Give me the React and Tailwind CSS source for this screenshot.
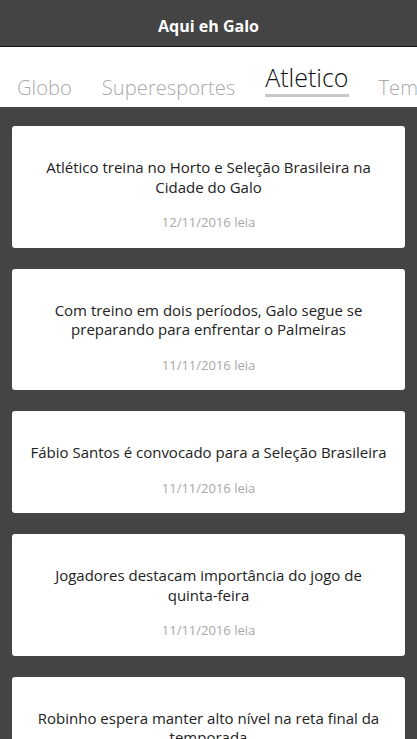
import React from "react";

const tabs = [
  { label: "Globo", active: false },
  { label: "Superesportes", active: false },
  { label: "Atletico", active: true },
  { label: "Tempo Real", active: false },
];

const news = [
  { title: "Atlético treina no Horto e Seleção Brasileira na Cidade do Galo", date: "12/11/2016" },
  { title: "Com treino em dois períodos, Galo segue se preparando para enfrentar o Palmeiras", date: "11/11/2016" },
  { title: "Fábio Santos é convocado para a Seleção Brasileira", date: "11/11/2016" },
  { title: "Jogadores destacam importância do jogo de", tail: "quinta-feira", date: "11/11/2016" },
  { title: "Robinho espera manter alto nível na reta final da temporada", date: "10/11/2016" },
];

function NewsCard({ title, tail, date }) {
  return (
    <div className="bg-white rounded-[3px] pt-8 pb-[17.5px] px-[14px] text-center">
      <p className="text-[15px] leading-[19.5px] text-[#222]">
        {title}
        {tail ? " " : null}
        {tail && <span className="whitespace-nowrap">{tail}</span>}
      </p>
      <p className="mt-[17px] text-[13px] leading-4 text-[#a8a8a8]">{date} leia</p>
    </div>
  );
}

export default function App() {
  return (
    <div className="h-[739px] overflow-hidden bg-[#444] font-['Open_Sans',sans-serif]">
      <header className="h-[47px] border-b border-[#111] flex items-center justify-center pt-[5px]">
        <h1 className="text-white font-bold text-[16px]">Aqui eh Galo</h1>
      </header>
      <nav className="h-[60px] bg-white flex items-end gap-[30px] pl-[17px] pb-[10px] overflow-hidden whitespace-nowrap">
        {tabs.map((t) =>
          t.active ? (
            <span
              key={t.label}
              className="text-[25px] leading-[28px] font-light text-[#111] border-b-[3px] border-[#c8c8c8] pb-[3px]"
            >
              {t.label}
            </span>
          ) : (
            <span key={t.label} className="text-[20.2px] leading-[26px] font-light text-[#aaa] mb-[-3px]">
              {t.label}
            </span>
          )
        )}
      </nav>
      <main className="flex flex-col gap-[21px] px-3 pt-[19px]">
        {news.map((n) => (
          <NewsCard key={n.title} {...n} />
        ))}
      </main>
    </div>
  );
}
